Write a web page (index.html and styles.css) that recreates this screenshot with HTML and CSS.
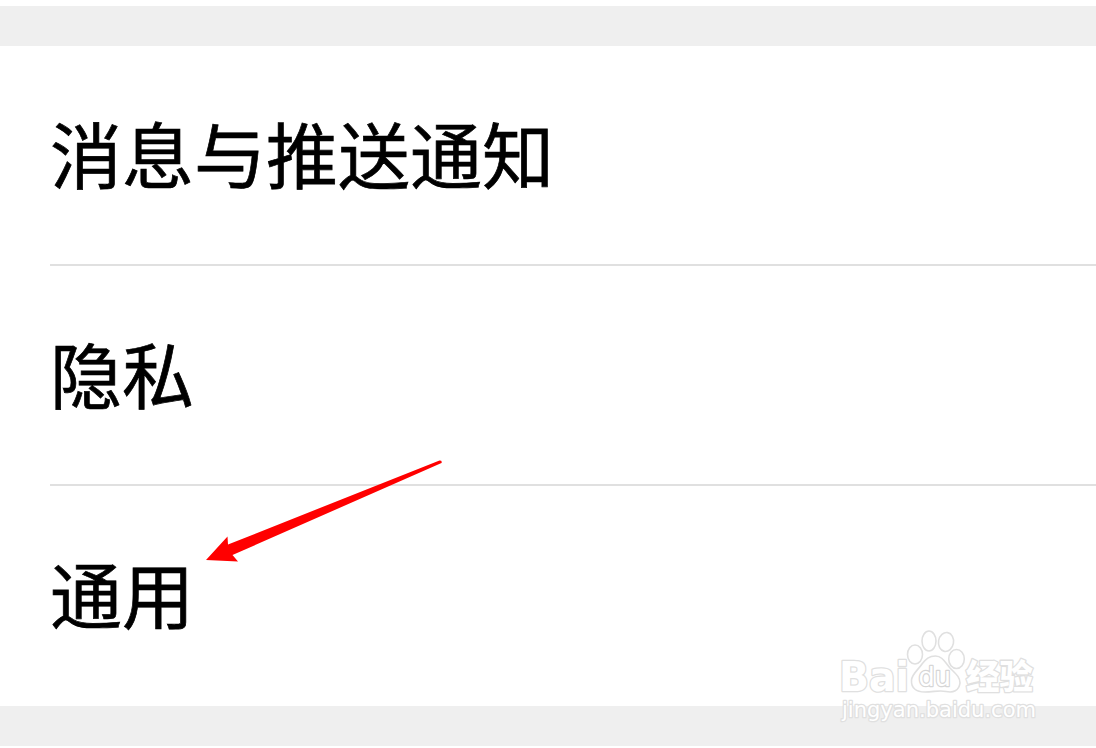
FILE: index.html
```html
<!DOCTYPE html>
<html lang="zh-CN">
<head>
<meta charset="utf-8">
<title>设置</title>
<link rel="stylesheet" href="styles.css">
</head>
<body>
<main class="screen">
  <div class="band"></div>
  <ul class="settings">
    <li class="item">消息与推送通知</li>
    <li class="item">隐私</li>
    <li class="item">通用</li>
  </ul>
  <div class="band"></div>
  <svg class="arrow" width="240" height="106" viewBox="204 458 240 106">
    <path d="M206 560 L227.500 536.500 L228 544.500 L439.500 460.500 Q442.500 460.500 441.500 463 L232.500 555 L238 561.500 Z"/>
  </svg>
  <svg class="watermark" width="220" height="104" viewBox="830 624 220 104">
    <g class="mark">
      <text class="logo" x="839" y="691" textLength="70" lengthAdjust="spacingAndGlyphs">Bai</text>
      <ellipse cx="915" cy="654.500" rx="7.500" ry="9.500"/>
      <ellipse cx="929" cy="641" rx="7" ry="10"/>
      <ellipse cx="946" cy="642" rx="7.500" ry="9.500" transform="rotate(10 946 642)"/>
      <ellipse cx="956.500" cy="659" rx="7.800" ry="9.500"/>
      <path d="M935.500 656 C942 656 945 662 950 668 C956 674 960 677 960 683 C959 691 953 693 946 691.500 C939 690 934 692 925 692 C916 692 911 688 911.500 680 C912 674 918 670 922 664 C926 659 929 656 935.500 656 Z"/>
      <text class="du" x="918.500" y="686" textLength="32.500" lengthAdjust="spacingAndGlyphs">du</text>
      <text class="name" x="966" y="688.500" textLength="67" lengthAdjust="spacingAndGlyphs">经验</text>
      <text class="site" x="842" y="717" textLength="194" lengthAdjust="spacingAndGlyphs">jingyan.baidu.com</text>
    </g>
  </svg>
</main>
</body>
</html>
```
FILE: styles.css
```css
body {
  margin: 0;
  background: #fff;
}

.screen {
  position: relative;
  box-sizing: border-box;
  width: 1096px;
  height: 748px;
  padding-top: 6px;
  overflow: hidden;
  background: #fff;
  font-family: "Noto Sans CJK SC", sans-serif;
}

.band {
  height: 40px;
  background: #efefef;
}

.settings {
  margin: 0;
  padding: 0 0 0 50px;
  list-style: none;
}

.item {
  box-sizing: border-box;
  height: 220px;
  border-bottom: 2px solid #e0e0e0;
  color: #000;
  font-size: 72px;
  line-height: 212px;
  -webkit-text-stroke: 0.7px #000;
}

.item:last-child {
  border-bottom-color: transparent;
}

.arrow {
  position: absolute;
  left: 204px;
  top: 458px;
  fill: #f00;
}

.watermark {
  position: absolute;
  left: 830px;
  top: 624px;
}

.mark {
  fill: #fff;
  stroke: #e0e0e0;
  stroke-width: 1.6px;
  stroke-linejoin: round;
}

.mark text {
  paint-order: stroke;
  stroke-width: 2.6px;
}

.logo {
  font: 700 41px "DejaVu Sans", sans-serif;
}

.mark .du {
  font: 400 26px "DejaVu Sans", sans-serif;
  stroke: #d6d6d6;
  stroke-width: 2.4px;
}

.name {
  font: 900 34px "Noto Sans CJK SC", sans-serif;
}

.site {
  font: 400 22px "DejaVu Sans", sans-serif;
}
```
